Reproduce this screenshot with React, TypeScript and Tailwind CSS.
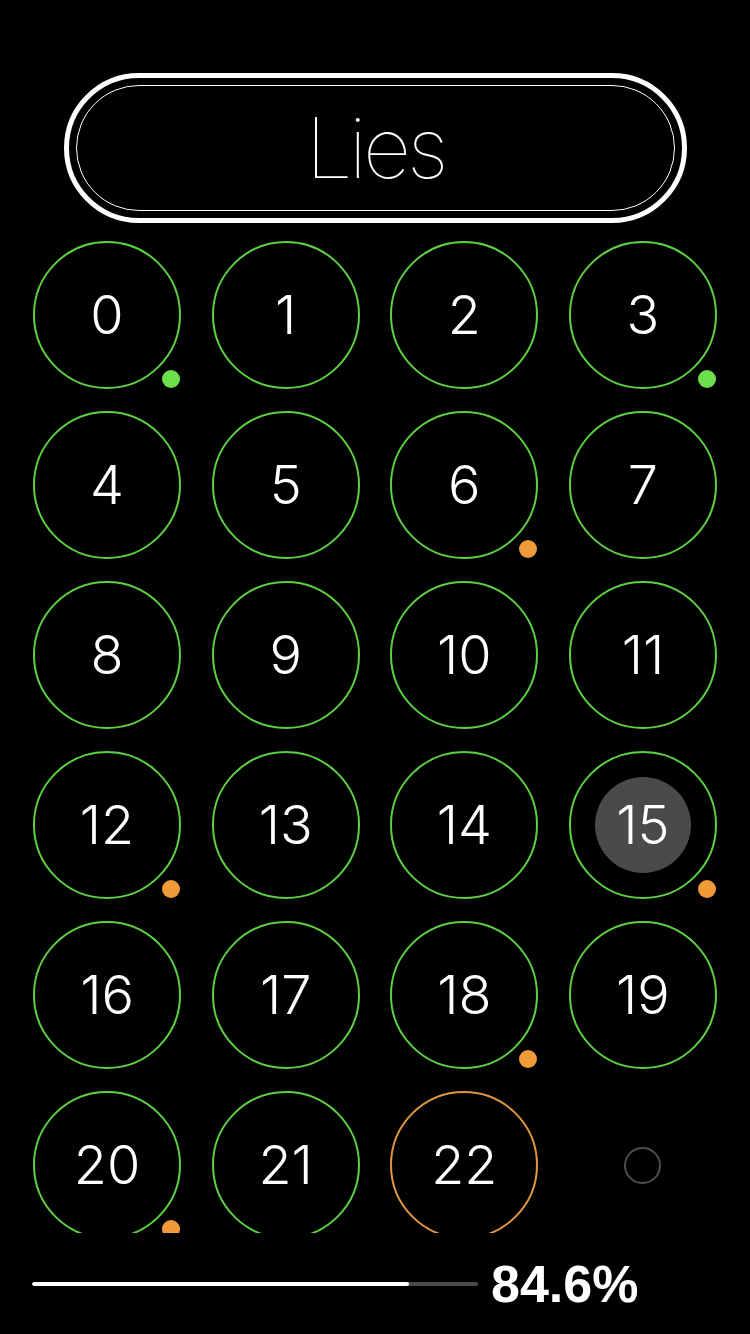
import React from "react";

type Cell = {
  n?: number;
  ring?: "green" | "orange";
  dot?: "green" | "orange";
  selected?: boolean;
};

const CELLS: Cell[] = [
  { n: 0, ring: "green", dot: "green" },
  { n: 1, ring: "green" },
  { n: 2, ring: "green" },
  { n: 3, ring: "green", dot: "green" },
  { n: 4, ring: "green" },
  { n: 5, ring: "green" },
  { n: 6, ring: "green", dot: "orange" },
  { n: 7, ring: "green" },
  { n: 8, ring: "green" },
  { n: 9, ring: "green" },
  { n: 10, ring: "green" },
  { n: 11, ring: "green" },
  { n: 12, ring: "green", dot: "orange" },
  { n: 13, ring: "green" },
  { n: 14, ring: "green" },
  { n: 15, ring: "green", dot: "orange", selected: true },
  { n: 16, ring: "green" },
  { n: 17, ring: "green" },
  { n: 18, ring: "green", dot: "orange" },
  { n: 19, ring: "green" },
  { n: 20, ring: "green", dot: "orange" },
  { n: 21, ring: "green" },
  { n: 22, ring: "orange" },
  {},
];

function NumberCell({ cell }: { cell: Cell }) {
  // empty slot: just the small grey ring
  if (cell.n === undefined) {
    return (
      <div className="w-[148px] h-[148px] flex items-center justify-center">
        <div className="w-[37px] h-[37px] rounded-full border-2 border-[#4d4d4d]" />
      </div>
    );
  }

  return (
    <div className="relative w-[148px] h-[148px]">
      <div
        className={`w-full h-full rounded-full border-2 flex items-center justify-center ${
          cell.ring === "orange" ? "border-[#e0973e]" : "border-[#5ccf42]"
        }`}
      >
        {cell.selected ? (
          <div className="w-[96px] h-[96px] rounded-full bg-[#4a4a4a] flex items-center justify-center">
            <span className="text-[54px] font-light leading-none text-white">{cell.n}</span>
          </div>
        ) : (
          <span className="text-[54px] font-light leading-none text-white">{cell.n}</span>
        )}
      </div>
      {cell.dot && (
        <span
          className={`absolute left-[129px] top-[129px] w-[18px] h-[18px] rounded-full ${
            cell.dot === "orange" ? "bg-[#f09a38]" : "bg-[#6be04c]"
          }`}
        />
      )}
    </div>
  );
}

export default function App() {
  const progress = 84.6;

  return (
    <div className="w-[750px] h-[1334px] bg-black text-white overflow-hidden flex flex-col font-['Inter',sans-serif]">
      {/* Title pill */}
      <div className="pt-[73px] flex justify-center">
        <div className="w-[623px] h-[150px] rounded-full border-[5px] border-white p-[7px]">
          <div className="w-full h-full rounded-full border-[1.5px] border-white flex items-center justify-center">
            <span className="text-[84px] font-thin leading-none tracking-[-4px]">Lies</span>
          </div>
        </div>
      </div>

      <div className="h-[1010px] overflow-hidden pt-[18px] pl-[33px]">
        <div className="grid grid-cols-[repeat(4,148px)] gap-x-[30.67px] gap-y-[22px]">
          {CELLS.map((cell, i) => (
            <NumberCell key={i} cell={cell} />
          ))}
        </div>
      </div>

      {/* Progress footer */}
      <div className="flex-1 flex items-center pl-[32px] gap-[13px]">
        <div className="w-[446px] h-[4px] rounded-full bg-[#4a4a4a] overflow-hidden">
          <div className="h-full bg-white rounded-full" style={{ width: `${progress}%` }} />
        </div>
        <span className="text-[52px] font-bold leading-none font-['Liberation_Sans',sans-serif]">
          {progress}%
        </span>
      </div>
    </div>
  );
}
